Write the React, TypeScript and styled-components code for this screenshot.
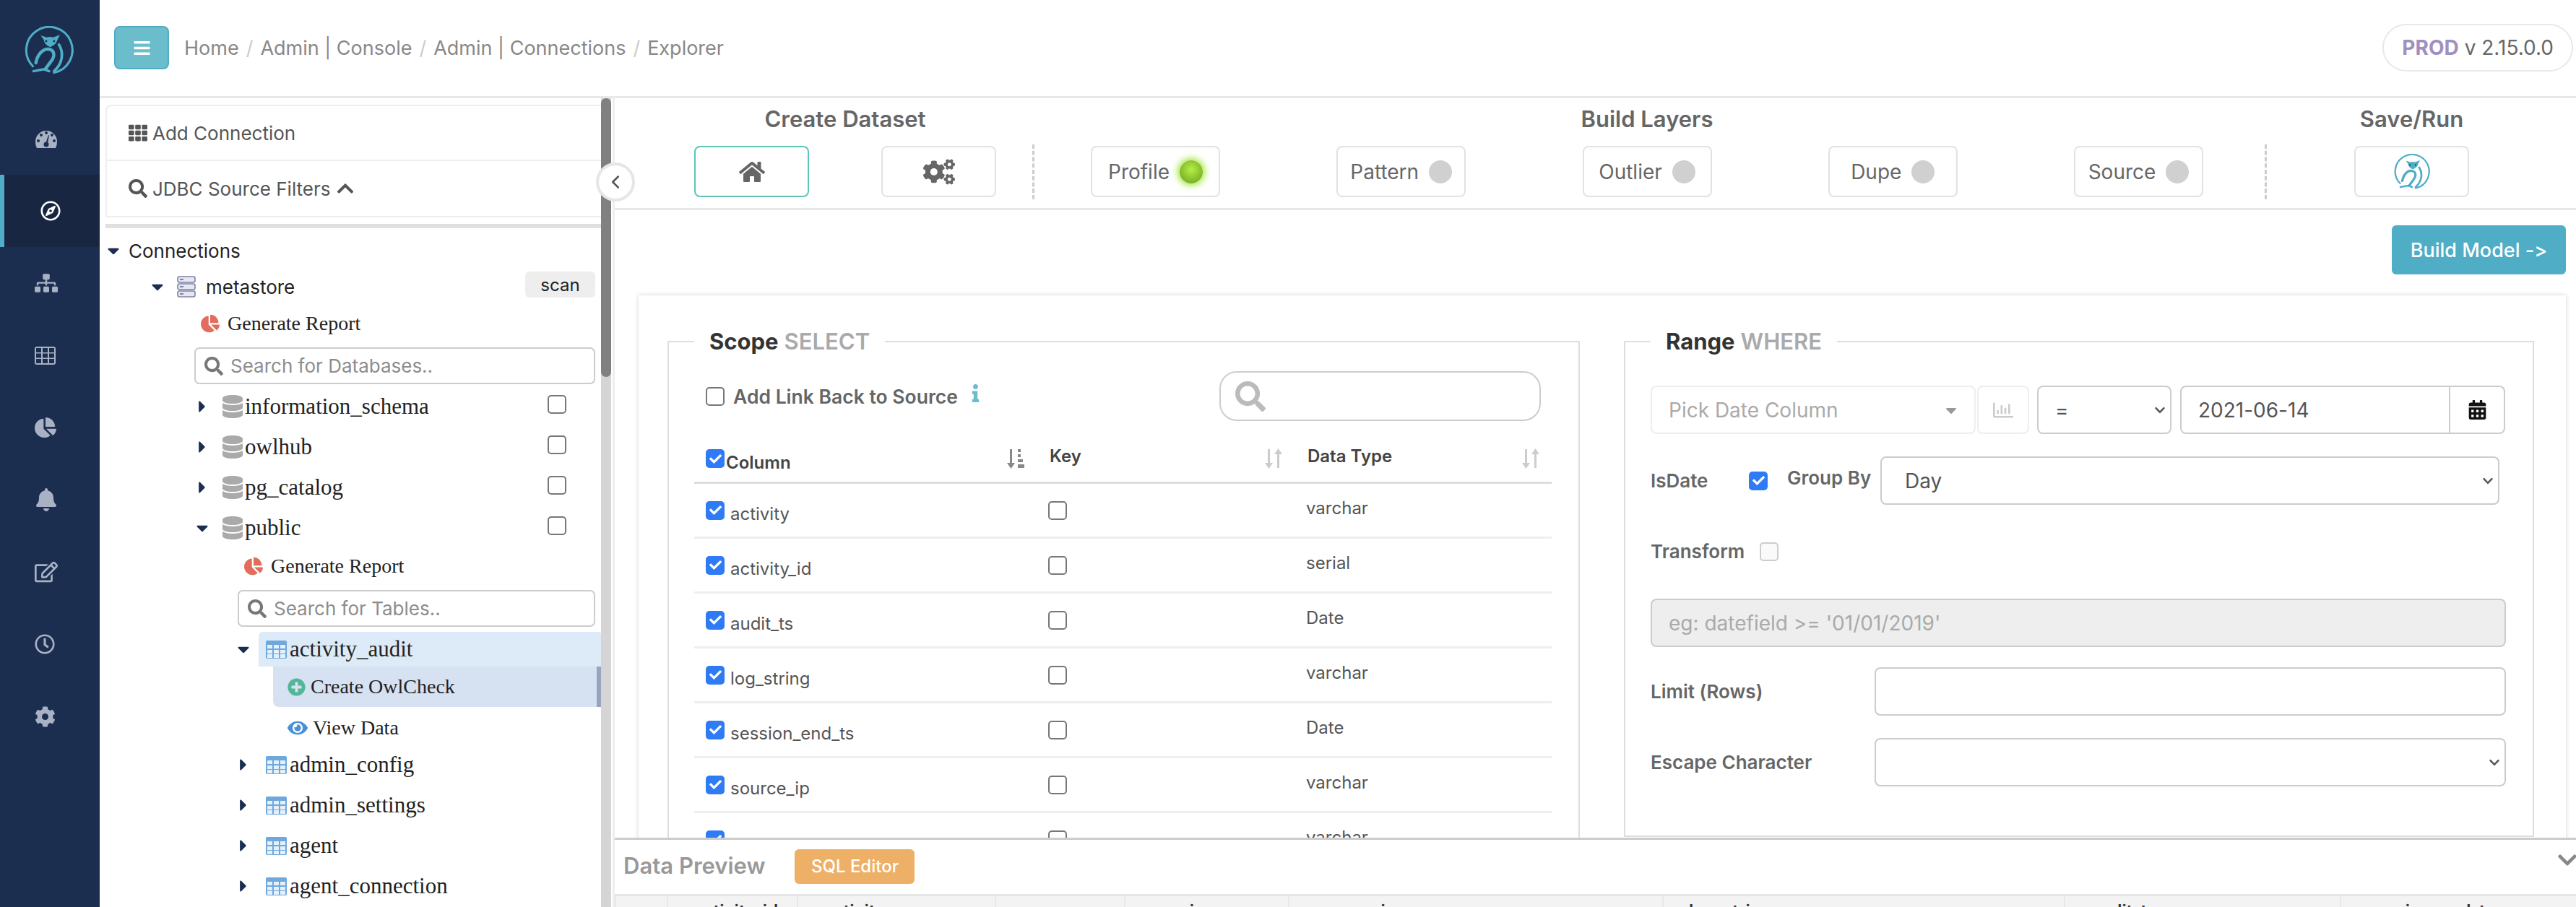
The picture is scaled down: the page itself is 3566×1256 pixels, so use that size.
import React from 'react'
import styled, { createGlobalStyle } from 'styled-components'
import {
  FaBars,
  FaBell,
  FaCalendarAlt,
  FaCaretDown,
  FaCaretRight,
  FaChartPie,
  FaCheck,
  FaChevronDown,
  FaChevronUp,
  FaCog,
  FaCogs,
  FaDatabase,
  FaEye,
  FaHome,
  FaInfo,
  FaPlusCircle,
  FaRegChartBar,
  FaRegClock,
  FaRegCompass,
  FaRegEdit,
  FaSearch,
  FaSitemap,
  FaTh,
} from 'react-icons/fa'
import { FiChevronLeft } from 'react-icons/fi'

const GlobalStyle = createGlobalStyle`
  html, body {
    margin: 0;
    width: 3566px;
    height: 1256px;
    overflow: hidden;
    background: #fff;
    font-family: Inter, "Liberation Sans", sans-serif;
    font-feature-settings: "calt" 0;
    color: #333;
  }
  * { box-sizing: border-box; }
`

const Page = styled.div`
  display: grid;
  grid-template-columns: 138px 1fr;
  grid-template-rows: 1256px;
  width: 3566px;
  height: 1256px;
  overflow: hidden;
`

const Sidebar = styled.nav`
  background: #1c2e4f;
  display: flex;
  flex-direction: column;
`

const LogoWrap = styled.div`
  height: 142px;
  padding: 36px 0 0 34px;
`

const NavItem = styled.div<{ $active?: boolean; $size: number }>`
  height: 100px;
  display: flex;
  align-items: center;
  padding-left: ${p => (p.$active ? '50px' : '48px')};
  font-size: ${p => p.$size}px;
  color: ${p => (p.$active ? '#fff' : '#a9b1c4')};
  background: ${p => (p.$active ? '#182642' : 'transparent')};
  border-left: ${p => (p.$active ? '6px solid #4fadc6' : '0')};
`

const Main = styled.div`
  display: flex;
  flex-direction: column;
  min-width: 0;
  min-height: 0;
`

const Header = styled.header`
  height: 136px;
  flex: none;
  display: flex;
  align-items: flex-start;
  padding: 36px 4px 0 20px;
  border-bottom: 3px solid #e8e8e8;
`

const MenuButton = styled.button`
  width: 76px;
  height: 60px;
  background: #6bbdcc;
  border: 2px solid #4fadc6;
  border-radius: 8px;
  color: #fff;
  display: flex;
  align-items: center;
  justify-content: center;
  font-size: 25px;
  padding: 0;
`

const Crumbs = styled.div`
  display: flex;
  align-items: center;
  height: 60px;
  margin-left: 21px;
  font-size: 27px;
  color: #888;
  flex: 1;
`

const CrumbSep = styled.span`
  color: #ccc;
  margin: 0 10px;
`

const VersionPill = styled.div`
  height: 66px;
  margin-top: -3px;
  padding: 0 25px;
  display: flex;
  align-items: center;
  gap: 8px;
  border: 2px solid #e8e8e8;
  border-radius: 33px;
  font-size: 28px;
  color: #666;
  b {
    color: #a18fc0;
    font-weight: 700;
  }
`

const Body = styled.div`
  position: relative;
  flex: 1;
  min-height: 0;
  display: grid;
  grid-template-columns: 708px 1fr;
  grid-template-rows: minmax(0, 1fr);
`

const TreePanel = styled.aside`
  position: relative;
  overflow: hidden;
  padding-top: 9px;
`

const ScrollTrack = styled.div`
  position: absolute;
  top: 0;
  right: 0;
  bottom: 0;
  width: 14px;
  background: #d5d5d5;
`

const ScrollThumb = styled.div`
  height: 386px;
  background: #808080;
  border-radius: 7px;
`

const CollapseTab = styled.div`
  position: absolute;
  left: 687px;
  top: 89px;
  width: 54px;
  height: 54px;
  border-radius: 50%;
  background: #fff;
  border: 4px solid #e6e6e6;
  display: flex;
  align-items: center;
  justify-content: center;
  font-size: 30px;
  color: #555;
  z-index: 2;
`

const TopCard = styled.div`
  margin: 0 4px 0 8px;
  border: 2px solid #eee;
  border-radius: 8px 8px 0 0;
`

const TopCardRow = styled.div<{ $last?: boolean }>`
  height: 76px;
  padding-left: 30px;
  display: flex;
  align-items: center;
  gap: 7px;
  font-size: 26px;
  color: #555;
  border-bottom: ${p => (p.$last ? '0' : '2px solid #eee')};
`

const GreyBar = styled.div`
  height: 6px;
  margin: 9px 4px 6px 8px;
  background: #e0e0e0;
`

const TreeRow = styled.div<{ $indent: number; $h?: number; $font?: 'name' | 'action' }>`
  height: ${p => p.$h ?? 56}px;
  margin-left: ${p => p.$indent}px;
  display: flex;
  align-items: center;
  color: #222;
  font-size: ${p => (p.$font === 'name' ? 31 : p.$font === 'action' ? 28 : 26)}px;
  font-family: ${p => (p.$font ? '"Liberation Serif", serif' : 'Inter, sans-serif')};
  white-space: nowrap;
`

const CaretBox = styled.span<{ $w: number }>`
  width: ${p => p.$w + 6}px;
  flex: none;
  display: flex;
  align-items: center;
  color: #1c2e4f;
  font-size: 26px;
  margin-left: -11px;
`

const ReportIcon = styled(FaChartPie)`
  color: #e36d5c;
  font-size: 26px;
  margin-right: 11px;
`

const DbIcon = styled(FaDatabase)`
  color: #aaa;
  font-size: 32px;
  width: 28px;
  margin-right: 3px;
`

const ScanButton = styled.span`
  margin-left: auto;
  margin-right: 22px;
  width: 97px;
  height: 36px;
  margin-top: -6px;
  background: #eee;
  border-radius: 6px;
  font-size: 24px;
  display: flex;
  align-items: center;
  justify-content: center;
`

const TreeSearch = styled.div<{ $indent: number; $top: number }>`
  height: 51px;
  margin: ${p => p.$top}px 22px 0 ${p => p.$indent}px;
  border: 2px solid #ccc;
  border-radius: 7px;
  display: flex;
  align-items: center;
  gap: 10px;
  padding-left: 12px;
  color: #777;
  font-size: 26px;
`

const TreeSearchInput = styled.input`
  border: 0;
  outline: 0;
  flex: 1;
  min-width: 0;
  padding: 0;
  font: 26px Inter, sans-serif;
  &::placeholder { color: #8d8d8d; }
`

const TreeGap = styled.div`
  height: 3px;
`

const RowCheck = styled.span`
  margin-left: auto;
  margin-right: 62px;
  margin-top: -6px;
  display: flex;
`

const TableLabel = styled.div<{ $active?: boolean }>`
  flex: 1;
  height: 48px;
  margin-right: 12px;
  padding-left: 10px;
  display: flex;
  align-items: center;
  gap: 4px;
  border-radius: 6px 6px 0 0;
  background: ${p => (p.$active ? '#dcebf7' : 'transparent')};
`

const OwlCheckRow = styled(TreeRow)`
  margin-right: 12px;
  padding-left: 20px;
  gap: 7px;
  background: #d6e1f1;
  border-right: 8px solid #97a4c0;
  border-radius: 0 0 0 8px;
`

const ViewRow = styled(TreeRow)`
  padding: 6px 0 0 20px;
  gap: 7px;
`

const ActiveTableRow = styled(TreeRow)`
  margin-top: 7px;
`

const PlusIcon = styled(FaPlusCircle)`
  color: #52b795;
  font-size: 25px;
`

const EyeIcon = styled(FaEye)`
  color: #4a90d9;
  font-size: 28px;
`

const Right = styled.div`
  display: flex;
  flex-direction: column;
  min-height: 0;
  border-left: 3px solid #eee;
  margin-left: 2px;
  min-width: 0;
`

const StepBar = styled.div`
  height: 155px;
  flex: none;
  display: flex;
  padding-left: 110px;
  border-bottom: 3px solid #e8e8e8;
`

const StepGroup = styled.div<{ $w: number }>`
  width: ${p => p.$w}px;
  flex: none;
`

const StepTitle = styled.div`
  height: 66px;
  display: flex;
  align-items: center;
  justify-content: center;
  padding-bottom: 10px;
  font-size: 31px;
  font-weight: 600;
  color: #666;
`

const StepButtons = styled.div`
  display: flex;
  justify-content: space-between;
`

const StepButton = styled.div<{ $active?: boolean; $w: number; $icon?: number }>`
  width: ${p => p.$w}px;
  height: 71px;
  display: flex;
  align-items: center;
  justify-content: center;
  gap: 14px;
  border: 2px solid ${p => (p.$active ? '#5dc6b8' : '#e2e2e2')};
  border-radius: 8px;
  font-size: ${p => p.$icon ?? 28}px;
  color: #666;
`

const Dot = styled.span<{ $on?: boolean }>`
  width: 32px;
  height: 32px;
  border-radius: 50%;
  background: ${p => (p.$on ? 'radial-gradient(circle at 50% 40%, #b2f043, #6a9a20)' : '#d0d0d0')};
  box-shadow: ${p => (p.$on ? '0 0 10px 3px #a4e83e' : 'none')};
`

const DashedSep = styled.div<{ $l: number; $r: number }>`
  width: 0;
  height: 76px;
  margin: 64px ${p => p.$r}px 0 ${p => p.$l}px;
  border-left: 3px dashed #ccc;
`

const Content = styled.div`
  flex: 1;
  min-height: 0;
  overflow: hidden;
  padding-top: 21px;
`

const BuildRow = styled.div`
  display: flex;
  justify-content: flex-end;
  padding-right: 14px;
`

const BuildButton = styled.button`
  width: 241px;
  height: 68px;
  border: 0;
  border-radius: 6px;
  background: #4fadc6;
  color: #fff;
  font: 500 27px Inter, sans-serif;
  font-feature-settings: "calt" 0;
  padding: 0;
`

const Card = styled.div`
  margin: 29px 14px 0 33px;
  padding: 47px 41px 0 40px;
  display: grid;
  grid-template-columns: 1263px 1260px;
  gap: 61px;
  align-items: start;
  box-shadow: 0 0 6px rgba(0, 0, 0, 0.18);
`

const Fieldset = styled.fieldset<{ $pt: number; $pb: number }>`
  margin: 0;
  min-width: 0;
  border: 2px solid #ddd;
  padding: ${p => p.$pt}px 37px ${p => p.$pb}px 35px;
`

const Legend = styled.legend`
  padding: 0 21px;
  height: 34px;
  line-height: 34px;
  font-size: 31px;
  font-weight: 700;
  color: #333;
  span {
    color: #aaa;
    font-weight: 600;
    margin-left: 8px;
  }
`

const LinkRow = styled.div`
  height: 69px;
  display: flex;
  align-items: center;
  padding: 0 15px 0 16px;
`

const LinkLabel = styled.span`
  margin-left: 12px;
  font-size: 26.5px;
  font-weight: 600;
  color: #666;
`

const InfoIcon = styled(FaInfo)`
  color: #6bbdcc;
  font-size: 25px;
  margin-left: 12px;
  margin-top: -8px;
`

const PillSearch = styled.div`
  width: 445px;
  height: 69px;
  margin-left: auto;
  border: 2px solid #ccc;
  border-radius: 24px;
  padding-left: 20px;
  display: flex;
  align-items: center;
  color: #bbb;
  font-size: 42px;
`

const Grid = styled.div<{ $head?: boolean }>`
  display: grid;
  grid-template-columns: 474px 357px 1fr;
  height: ${p => (p.$head ? 87 : 76)}px;
  padding-top: ${p => (p.$head ? '20px' : '0')};
  border-bottom: 3px solid ${p => (p.$head ? '#ddd' : '#eee')};
`

const Cell = styled.div`
  display: flex;
  align-items: center;
  padding: 0 16px;
  min-width: 0;
  font-size: 24px;
  color: #555;
`

const HeadText = styled.span<{ $drop?: number }>`
  font-weight: 600;
  color: #444;
  margin-top: ${p => p.$drop ?? -8}px;
  margin-left: 2px;
`

const SortWrap = styled.span`
  margin-left: auto;
  display: flex;
`

const NameText = styled.span`
  margin: 10px 0 0 8px;
`

const TypeText = styled.span`
  margin-bottom: 6px;
`

const BoxShell = styled.span<{ $on?: boolean; $faint?: boolean }>`
  width: 26px;
  height: 26px;
  flex: none;
  border-radius: 5px;
  display: inline-flex;
  align-items: center;
  justify-content: center;
  color: #fff;
  font-size: 17px;
  background: ${p => (p.$on ? '#2f7bf6' : p.$faint ? '#fafafa' : '#fff')};
  border: 2px solid ${p => (p.$on ? '#2f7bf6' : p.$faint ? '#ccc' : '#777')};
`

const FormRow = styled.div<{ $top?: number }>`
  display: flex;
  align-items: center;
  margin-top: ${p => p.$top ?? 0}px;
  min-height: 26px;
`

const Box = styled.div<{ $w?: number; $mr?: number; $soft?: boolean; $grey?: boolean; $pl?: number }>`
  height: 67px;
  ${p => (p.$w ? `width: ${p.$w}px; flex: none;` : 'flex: 1;')}
  margin-right: ${p => p.$mr ?? 0}px;
  display: flex;
  align-items: center;
  padding: 0 23px 0 ${p => p.$pl ?? 23}px;
  border: 2px solid ${p => (p.$soft ? '#eee' : '#ccc')};
  border-radius: 8px;
  font-size: 28px;
  color: #555;
  background: ${p => (p.$grey ? '#eee' : '#fff')};
`

const MutedText = styled.span`
  color: #aaa;
`

const Chevron = styled(FaChevronDown)`
  margin-left: auto;
  margin-right: -17px;
  font-size: 16px;
  color: #555;
`

const PickCaret = styled(FaCaretDown)`
  margin-left: auto;
  margin-right: -3px;
  font-size: 24px;
  color: #999;
`

const ChartBox = styled(Box)`
  padding: 0;
  justify-content: center;
  color: #ccc;
`

const DateBox = styled(Box)`
  padding: 0 0 0 23px;
`

const CalendarAddon = styled.span`
  margin-left: auto;
  width: 76px;
  height: 100%;
  border-left: 2px solid #ccc;
  display: flex;
  align-items: center;
  justify-content: center;
  color: #111;
  font-size: 27px;
`

const FieldLabel = styled.span<{ $w?: number; $up?: number; $ml?: number }>`
  ${p => (p.$w ? `width: ${p.$w}px; flex: none;` : '')}
  margin-bottom: ${p => p.$up ?? 0}px;
  margin-left: ${p => p.$ml ?? 0}px;
  font-size: 26px;
  font-weight: 600;
  color: #666;
`

const Dock = styled.div`
  height: 96px;
  flex: none;
  position: relative;
  z-index: 1;
  overflow: hidden;
  background: #fff;
  border-top: 3px solid #ccc;
`

const DockBar = styled.div`
  height: 75px;
  display: flex;
  align-items: center;
  padding: 0 0 5px 12px;
`

const DockTitle = styled.span`
  font-size: 31px;
  font-weight: 600;
  color: #999;
`

const SqlButton = styled.button`
  width: 166px;
  height: 48px;
  margin-left: 41px;
  margin-top: 3px;
  border: 0;
  border-radius: 6px;
  background: #eeb067;
  color: #fff;
  font: 500 24px Inter, sans-serif;
  padding: 0;
`

const DockChevron = styled(FaChevronDown)`
  margin-left: auto;
  margin-top: -14px;
  margin-right: -3px;
  font-size: 30px;
  color: #888;
`

const PreviewHead = styled.div`
  display: grid;
  grid-template-columns: 72px 180px 274px 179px 227px 518px 556px 382px 1fr;
  height: 30px;
  background: #f3f3f3;
  border-top: 3px solid #e6e6e6;
`

const PreviewCell = styled.div`
  border-left: 2px solid #e8e8e8;
  padding: 6px 0 0 35px;
  font-size: 24px;
  line-height: 30px;
  font-weight: 600;
  color: #333;
  white-space: nowrap;
`

const Logo = ({ size }: { size: number }) => (
  <svg width={size} height={size} viewBox="0 0 100 100" fill="none" stroke="#4fadc6" strokeWidth="4.5" strokeLinecap="round">
    <path d="M17 82 A47 47 0 1 1 60 95" />
    <path d="M33 19 L45 23 Q51 21 58 23 L72 18 L67 28 Q65 38 52 43 Q40 38 39 28 Z" fill="#4fadc6" stroke="none" />
    <circle cx="44" cy="31" r="2.2" fill="#1c2e4f" stroke="none" />
    <circle cx="60" cy="31" r="2.2" fill="#1c2e4f" stroke="none" />
    <path d="M23 75 C26 58 37 46 49 47 C62 49 62 62 54 72 L42 88" strokeWidth="6.5" />
    <path d="M18 92 L40 88 L50 92" strokeWidth="5" />
    <path d="M70 38 C80 54 78 76 60 92" strokeWidth="5.5" />
  </svg>
)

const GaugeIcon = () => (
  <svg width="32" height="26" viewBox="0 0 32 26">
    <path d="M1 17 A15 15 0 0 1 31 17 Q31 22 29 26 L3 26 Q1 22 1 17 Z" fill="#a9b1c4" />
    <g fill="#1c2e4f">
      <circle cx="5" cy="16" r="2" />
      <circle cx="9" cy="8" r="2" />
      <circle cx="16" cy="5" r="2" />
      <circle cx="24" cy="8" r="2" />
      <circle cx="27" cy="16" r="2" />
      <circle cx="16" cy="21" r="3.5" />
      <path d="M15 20 L19 8 L20 8.4 L17.6 21 Z" />
    </g>
  </svg>
)

const GridIcon = () => (
  <svg width="29" height="25" viewBox="0 0 29 25">
    <rect width="29" height="25" rx="3" fill="#a9b1c4" />
    {[2, 9.5, 17].map(y =>
      [2, 11, 20].map(x => <rect key={`${x}-${y}`} x={x} y={y} width="7" height="6" fill="#1c2e4f" />),
    )}
  </svg>
)

const ServerIcon = () => (
  <svg width="26" height="30" viewBox="0 0 26 30" style={{ marginRight: 14, flex: 'none' }}>
    {[1, 11, 21].map(y => (
      <g key={y}>
        <rect x="1" y={y} width="24" height="8" rx="2.5" fill="#e6e7f1" stroke="#7f83a6" strokeWidth="1.6" />
        <rect x="4" y={y + 3} width="5" height="2" fill="#7f83a6" />
      </g>
    ))}
  </svg>
)

const TableIcon = () => (
  <svg width="29" height="25" viewBox="0 0 29 25" style={{ flex: 'none' }}>
    <rect width="29" height="25" rx="2" fill="#6fa8dc" />
    {[6, 13, 19].map(y =>
      [2, 11, 20].map(x => <rect key={`${x}-${y}`} x={x} y={y} width="7" height="5" fill="#e4f0fa" />),
    )}
  </svg>
)

const SortIcon = ({ active }: { active?: boolean }) => (
  <svg width="26" height="28" viewBox="0 0 26 28" fill={active ? '#888' : '#ccc'}>
    <rect x="5" y="1" width="3" height="22" />
    <path d="M1 20 H12 L6.5 28 Z" />
    {active ? (
      <g>
        <rect x="16" y="1" width="4" height="4" />
        <rect x="16" y="8" width="4" height="4" />
        <rect x="16" y="15" width="7" height="4" />
        <rect x="16" y="22" width="9" height="5" />
      </g>
    ) : (
      <g>
        <rect x="18" y="5" width="3" height="22" />
        <path d="M14 8 H25 L19.5 0 Z" />
      </g>
    )}
  </svg>
)

const CheckBox = ({ on, faint }: { on?: boolean; faint?: boolean }) => (
  <BoxShell $on={on} $faint={faint}>{on && <FaCheck />}</BoxShell>
)

const Caret = ({ open, w }: { open?: boolean; w: number }) => (
  <CaretBox $w={w}>{open ? <FaCaretDown /> : <FaCaretRight />}</CaretBox>
)

const navItems = [
  { icon: <GaugeIcon />, size: 32 },
  { icon: <FaRegCompass />, size: 28 },
  { icon: <FaSitemap />, size: 32 },
  { icon: <GridIcon />, size: 29 },
  { icon: <FaChartPie />, size: 30 },
  { icon: <FaBell />, size: 32 },
  { icon: <FaRegEdit />, size: 32 },
  { icon: <FaRegClock />, size: 28 },
  { icon: <FaCog />, size: 29 },
]
const databases = ['information_schema', 'owlhub', 'pg_catalog', 'public']
const tables = ['admin_config', 'admin_settings', 'agent', 'agent_connection']
const columns: [string, string][] = [
  ['activity', 'varchar'],
  ['activity_id', 'serial'],
  ['audit_ts', 'Date'],
  ['log_string', 'varchar'],
  ['session_end_ts', 'Date'],
  ['source_ip', 'varchar'],
  ['source_port', 'varchar'],
]
const layers = ['Pattern', 'Outlier', 'Dupe', 'Source']
const previewCols = ['', 'activity_id', 'activity', '', 'session', 'source_ip', 'log_string', 'audit_ts', 'session_end_ts']

const App = () => {
  return (
    <Page>
      <GlobalStyle />
      <Sidebar>
        <LogoWrap>
          <Logo size={68} />
        </LogoWrap>
        {navItems.map((item, i) => (
          <NavItem key={i} $active={i === 1} $size={item.size}>{item.icon}</NavItem>
        ))}
      </Sidebar>
      <Main>
        <Header>
          <MenuButton><FaBars /></MenuButton>
          <Crumbs>
            Home<CrumbSep>/</CrumbSep>Admin | Console<CrumbSep>/</CrumbSep>Admin | Connections<CrumbSep>/</CrumbSep>Explorer
          </Crumbs>
          <VersionPill><b>PROD</b> v 2.15.0.0</VersionPill>
        </Header>
        <Body>
          <TreePanel>
            <TopCard>
              <TopCardRow><FaTh /> Add Connection</TopCardRow>
              <TopCardRow $last><FaSearch /> JDBC Source Filters <FaChevronUp /></TopCardRow>
            </TopCard>
            <GreyBar />
            <TreeRow $indent={17} $h={50}>
              <Caret open w={28} />Connections
            </TreeRow>
            <TreeRow $indent={78} $h={50}>
              <Caret open w={34} /><ServerIcon />metastore<ScanButton>scan</ScanButton>
            </TreeRow>
            <TreeRow $indent={140} $h={52} $font="action">
              <ReportIcon />Generate Report
            </TreeRow>
            <TreeSearch $indent={131} $top={7}>
              <FaSearch />
              <TreeSearchInput placeholder="Search for Databases.." />
            </TreeSearch>
            <TreeGap />
            {databases.map(name => (
              <TreeRow key={name} $indent={140} $font="name">
                <Caret open={name === 'public'} w={35} /><DbIcon />{name}
                <RowCheck><CheckBox /></RowCheck>
              </TreeRow>
            ))}
            <TreeRow $indent={200} $h={50} $font="action">
              <ReportIcon />Generate Report
            </TreeRow>
            <TreeSearch $indent={191} $top={8}>
              <FaSearch />
              <TreeSearchInput placeholder="Search for Tables.." />
            </TreeSearch>
            <ActiveTableRow $indent={197} $h={48} $font="name">
              <Caret open w={28} />
              <TableLabel $active><TableIcon />activity_audit</TableLabel>
            </ActiveTableRow>
            <OwlCheckRow $indent={240} $font="action"><PlusIcon />Create OwlCheck</OwlCheckRow>
            <ViewRow $indent={240} $h={52} $font="action"><EyeIcon />View Data</ViewRow>
            {tables.map(name => (
              <TreeRow key={name} $indent={197} $font="name">
                <Caret w={28} />
                <TableLabel><TableIcon />{name}</TableLabel>
              </TreeRow>
            ))}
            <ScrollTrack><ScrollThumb /></ScrollTrack>
          </TreePanel>
          <CollapseTab><FiChevronLeft /></CollapseTab>
          <Right>
            <StepBar>
              <StepGroup $w={418}>
                <StepTitle>Create Dataset</StepTitle>
                <StepButtons>
                  <StepButton $active $w={159} $icon={36}><FaHome /></StepButton>
                  <StepButton $w={159} $icon={44}><FaCogs /></StepButton>
                </StepButtons>
              </StepGroup>
              <DashedSep $l={50} $r={78} />
              <StepGroup $w={1540}>
                <StepTitle>Build Layers</StepTitle>
                <StepButtons>
                  <StepButton $w={179}>Profile<Dot $on /></StepButton>
                  {layers.map(name => (
                    <StepButton key={name} $w={179}>{name}<Dot /></StepButton>
                  ))}
                </StepButtons>
              </StepGroup>
              <DashedSep $l={85} $r={121} />
              <StepGroup $w={159}>
                <StepTitle>Save/Run</StepTitle>
                <StepButton $w={159}><Logo size={50} /></StepButton>
              </StepGroup>
            </StepBar>
            <Content>
              <BuildRow><BuildButton>Build Model -&gt;</BuildButton></BuildRow>
              <Card>
                <Fieldset $pt={24} $pb={0}>
                  <Legend>Scope<span>SELECT</span></Legend>
                  <LinkRow>
                    <CheckBox />
                    <LinkLabel>Add Link Back to Source</LinkLabel>
                    <InfoIcon />
                    <PillSearch><FaSearch /></PillSearch>
                  </LinkRow>
                  <Grid $head>
                    <Cell><CheckBox on /><HeadText $drop={10}>Column</HeadText><SortWrap><SortIcon active /></SortWrap></Cell>
                    <Cell><HeadText>Key</HeadText><SortWrap><SortIcon /></SortWrap></Cell>
                    <Cell><HeadText>Data Type</HeadText><SortWrap><SortIcon /></SortWrap></Cell>
                  </Grid>
                  {columns.map(([name, type]) => (
                    <Grid key={name}>
                      <Cell><CheckBox on /><NameText>{name}</NameText></Cell>
                      <Cell><CheckBox /></Cell>
                      <Cell><TypeText>{type}</TypeText></Cell>
                    </Grid>
                  ))}
                </Fieldset>
                <Fieldset $pt={44} $pb={68}>
                  <Legend>Range<span>WHERE</span></Legend>
                  <FormRow>
                    <Box $w={450} $mr={2} $soft><MutedText>Pick Date Column</MutedText><PickCaret /></Box>
                    <ChartBox $w={72} $mr={11} $soft><FaRegChartBar /></ChartBox>
                    <Box $w={186} $mr={12}>=<Chevron /></Box>
                    <DateBox $w={450}>2021-06-14<CalendarAddon><FaCalendarAlt /></CalendarAddon></DateBox>
                  </FormRow>
                  <FormRow $top={31}>
                    <FieldLabel $w={136}>IsDate</FieldLabel>
                    <CheckBox on />
                    <FieldLabel $w={129} $up={8} $ml={27}>Group By</FieldLabel>
                    <Box $mr={9} $pl={32}>Day<Chevron /></Box>
                  </FormRow>
                  <FormRow $top={49}>
                    <FieldLabel $w={151}>Transform</FieldLabel>
                    <CheckBox faint />
                  </FormRow>
                  <FormRow $top={50}>
                    <Box $grey><MutedText>eg: datefield &gt;= '01/01/2019'</MutedText></Box>
                  </FormRow>
                  <FormRow $top={28}>
                    <FieldLabel $w={310}>Limit (Rows)</FieldLabel>
                    <Box />
                  </FormRow>
                  <FormRow $top={31}>
                    <FieldLabel $w={310}>Escape Character</FieldLabel>
                    <Box><Chevron /></Box>
                  </FormRow>
                </Fieldset>
              </Card>
            </Content>
            <Dock>
              <DockBar>
                <DockTitle>Data Preview</DockTitle>
                <SqlButton>SQL Editor</SqlButton>
                <DockChevron />
              </DockBar>
              <PreviewHead>
                {previewCols.map((c, i) => <PreviewCell key={i}>{c}</PreviewCell>)}
              </PreviewHead>
            </Dock>
          </Right>
        </Body>
      </Main>
    </Page>
  )
}

export default App
